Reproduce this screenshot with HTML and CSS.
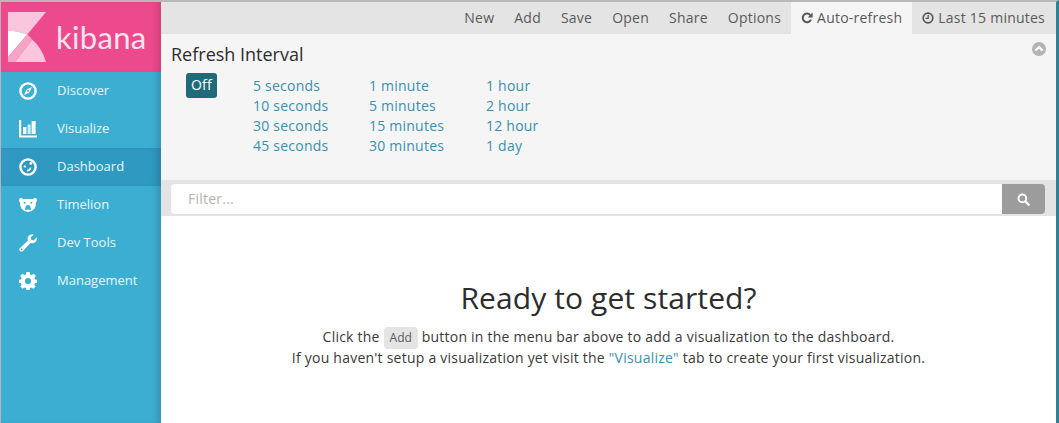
FILE: index.html
```html
<!DOCTYPE html>
<html lang="en">
<head>
<meta charset="utf-8">
<title>Kibana</title>
<link rel="stylesheet" href="styles.css">
</head>
<body>
<div class="app">
  <aside class="sidebar">
    <div class="brand">
      <svg class="logo" viewBox="0 0 38 50" width="38" height="50">
        <path fill="#f9c6dd" d="M0 0H38L19.3 22.5Q10 18.7 0 18.7Z"/>
        <path fill="#ffffff" d="M0 18.7Q10 18.7 19.3 22.5L0 45Z"/>
        <path fill="#f5a3c7" d="M0 45L19.3 22.5Q22 24.5 24.3 27.8L7 50H0Z"/>
        <path fill="#f9c6dd" d="M7 50L24.3 27.8Q34 36 38 50Z"/>
      </svg>
      <span class="brand-name">kibana</span>
    </div>
    <nav class="nav">
      <a class="nav-item"><svg class="nav-icon" viewBox="0 0 18 18"><circle cx="9" cy="9" r="7.6" fill="none" stroke="#fff" stroke-width="2.4"/><path fill="#fff" d="M13 5L10.4 10.4 5 13 7.6 7.6Z"/><circle cx="9" cy="9" r="1" fill="#3caed2"/></svg><span>Discover</span></a>
      <a class="nav-item"><svg class="nav-icon" viewBox="0 0 18 18"><path fill="#fff" d="M0 0H2.2V15.4H18V17.6H0Z"/><rect x="4" y="7" width="3.4" height="7" fill="#fff"/><rect x="8.6" y="4.5" width="3" height="9.5" fill="#fff" opacity=".8"/><rect x="12.6" y="1" width="4" height="13" fill="#fff"/></svg><span>Visualize</span></a>
      <a class="nav-item active"><svg class="nav-icon" viewBox="0 0 18 18"><circle cx="9" cy="9" r="7.6" fill="none" stroke="#fff" stroke-width="2.4"/><circle cx="5.8" cy="8.4" r="1.2" fill="#fff"/><circle cx="11.8" cy="5.4" r="1.4" fill="#fff"/><path fill="none" stroke="#fff" stroke-width="1.6" d="M8 12.6Q11 12.6 11.6 9.6"/></svg><span>Dashboard</span></a>
      <a class="nav-item"><svg class="nav-icon" viewBox="0 0 18 18"><path fill="#fff" d="M0 4Q0 2 2 2 3.4 2 4.2 3H13.8Q14.6 2 16 2 18 2 18 4 18 5.6 17 6.4 17.4 14.6 9 16 .6 14.6 1 6.4 0 5.6 0 4Z"/><circle cx="5.6" cy="6.8" r="1" fill="#3caed2"/><circle cx="12.4" cy="6.8" r="1" fill="#3caed2"/><path fill="#3caed2" d="M6 14Q6.2 9 9 9T12 14Q9 12.8 6 14Z"/></svg><span>Timelion</span></a>
      <a class="nav-item"><svg class="nav-icon" viewBox="0 0 18 18"><path fill="#fff" d="M17.6 3.2Q18.4 6.4 16.2 8.2 14 10 11.4 8.9L4 16.9Q2.4 18.2.9 17 -.4 15.5 1 14L9 6.6Q7.9 4 9.7 1.8 11.6-.3 14.8.4L11.6 3.5 12.2 5.8 14.5 6.4Z"/><circle cx="2.6" cy="15.4" r=".9" fill="#3caed2"/></svg><span>Dev Tools</span></a>
      <a class="nav-item"><svg class="nav-icon" viewBox="0 0 18 18"><path fill="#fff" fill-rule="evenodd" d="M7.4 0H10.6L11.1 2.4 12.7 3.1 14.8 1.7 16.9 3.9 15.5 5.9 16.2 7.5 18 7.8V10.8L15.9 11.2 15.3 12.7 16.6 14.6 14.4 16.8 12.5 15.5 11 16.1 10.6 18H7.4L7 16.1 5.4 15.5 3.5 16.8 1.3 14.6 2.6 12.7 2 11.2 0 10.8V7.8L2 7.4 2.6 5.9 1.2 3.9 3.3 1.7 5.3 3.1 6.9 2.4ZM9 5.9A3.1 3.1 0 1 0 9 12.1 3.1 3.1 0 1 0 9 5.9Z"/></svg><span>Management</span></a>
    </nav>
  </aside>
  <main class="main">
    <header class="topbar">
      <a class="tab">New</a>
      <a class="tab">Add</a>
      <a class="tab">Save</a>
      <a class="tab">Open</a>
      <a class="tab">Share</a>
      <a class="tab">Options</a>
      <a class="tab current"><svg class="tab-icon" viewBox="0 0 12 12"><path fill="none" stroke="#555" stroke-width="2" d="M10 7.6A4.3 4.3 0 1 1 9.2 3"/><path fill="#555" d="M11.6.6V5.6H6.8Z"/></svg>Auto-refresh</a>
      <a class="tab"><svg class="tab-icon" viewBox="0 0 12 12"><circle cx="6" cy="6" r="4.8" fill="none" stroke="#555" stroke-width="1.7"/><path fill="none" stroke="#555" stroke-width="1.3" d="M6.2 2.8V6.4H3.6"/></svg>Last 15 minutes</a>
    </header>
    <section class="panel">
      <div class="panel-head">
        <h2 class="panel-title">Refresh Interval</h2>
        <svg class="collapse" viewBox="0 0 14 14" width="14" height="14"><circle cx="7" cy="7" r="7" fill="#b3b3b3"/><path fill="none" stroke="#fff" stroke-width="2.2" d="M3.4 8.6L7 5 10.6 8.6"/></svg>
      </div>
      <div class="intervals">
        <div class="off-col"><span class="off">Off</span></div>
        <ul class="col col-a"><li>5 seconds</li><li>10 seconds</li><li>30 seconds</li><li>45 seconds</li></ul>
        <ul class="col col-b"><li>1 minute</li><li>5 minutes</li><li>15 minutes</li><li>30 minutes</li></ul>
        <ul class="col"><li>1 hour</li><li>2 hour</li><li>12 hour</li><li>1 day</li></ul>
      </div>
    </section>
    <div class="filter-band">
      <div class="filter">
        <span class="filter-input">Filter...</span>
        <span class="filter-btn"><svg viewBox="0 0 14 14" width="13" height="13"><circle cx="5.8" cy="5.8" r="4.2" fill="none" stroke="#fff" stroke-width="2"/><path stroke="#fff" stroke-width="2.4" stroke-linecap="round" d="M9 9L12.6 12.6"/></svg></span>
      </div>
    </div>
    <section class="empty">
      <h1 class="empty-title">Ready to get started?</h1>
      <p class="empty-line">Click the <span class="kbd">Add</span> button in the menu bar above to add a visualization to the dashboard.</p>
      <p class="empty-line">If you haven't setup a visualization yet visit the <a class="link">"Visualize"</a> tab to create your first visualization.</p>
    </section>
  </main>
</div>
</body>
</html>
```

FILE: styles.css
```css
* { box-sizing: border-box; }
html, body { margin: 0; height: 100%; overflow: hidden; background: #fff; }
body { font-family: "Open Sans", sans-serif; font-size: 14px; letter-spacing: .23px; color: #2d2d2d; }

.app {
  display: flex;
  height: 423px;
  border-top: 2px solid #b9b9b9;
  border-left: 1px solid #b5b5b5;
  border-right: 3px solid #2f8296;
}

.sidebar {
  width: 160px;
  flex: none;
  background: #3caed2;
  box-shadow: inset -7px 0 6px -3px rgba(0, 0, 0, .14);
}
.brand {
  height: 70px;
  background: #ec4a8c;
  box-shadow: inset -7px 0 6px -3px rgba(0, 0, 0, .12);
  display: flex;
  align-items: flex-start;
  padding: 10px 0 0 7px;
}
.brand-name {
  font-family: "Lato", sans-serif;
  font-size: 31px;
  font-weight: 400;
  line-height: 40px;
  letter-spacing: .3px;
  color: #fde3ee;
  margin: 5px 0 0 10px;
}
.nav-item {
  display: flex;
  align-items: center;
  height: 38px;
  padding-left: 18px;
  color: #e6f6fb;
  font-size: 13px;
  letter-spacing: 0;
}
.nav-item span { position: relative; top: -1px; }
.nav-item.active { background: #2f99c1; box-shadow: inset -7px 0 6px -3px rgba(0, 0, 0, .14); }
.nav-icon { width: 18px; height: 18px; margin-right: 20px; flex: none; }

.main { flex: 1; min-width: 0; display: flex; flex-direction: column; }

.topbar {
  height: 32px;
  flex: none;
  background: #e4e4e4;
  display: flex;
  justify-content: flex-end;
  padding-right: 1px;
  color: #5a5a5a;
}
.tab {
  display: flex;
  align-items: center;
  padding: 0 10px 1px;
  color: #5a5a5a;
  white-space: nowrap;
}
.tab.current { background: #f5f5f5; }
.tab-icon { width: 12px; height: 12px; margin-right: 4px; }

.panel { height: 146px; flex: none; background: #f5f5f5; padding: 8px 10px 0; }
.panel-head { display: flex; justify-content: space-between; align-items: flex-start; }
.panel-title { margin: 0; font-size: 18px; font-weight: 400; line-height: 24px; letter-spacing: 0; color: #2d2d2d; }
.intervals { display: flex; margin-top: 7px; padding-left: 15px; line-height: 20px; }
.off-col { width: 67px; flex: none; }
.off {
  display: block;
  width: 31px;
  height: 25px;
  line-height: 24px;
  text-align: center;
  color: #fff;
  background: #1f6b7a;
  border-radius: 3px;
}
.col { list-style: none; margin: 3px 0 0; padding: 0; color: #3a90ae; width: 116px; flex: none; }
.col-b { width: 117px; }

.filter-band { height: 36px; flex: none; background: #e4e4e4; padding: 4px 11px 2px 10px; }
.filter { display: flex; height: 30px; }
.filter-input {
  flex: 1;
  background: #fff;
  border-radius: 4px 0 0 4px;
  padding-left: 17px;
  line-height: 30px;
  color: #b4b4b4;
}
.filter-btn {
  width: 43px;
  flex: none;
  background: #9c9c9c;
  border-radius: 0 4px 4px 0;
  display: flex;
  align-items: center;
  justify-content: center;
}

.empty { flex: 1; text-align: center; padding-top: 61px; }
.empty-title { margin: 0 0 7px; font-size: 30px; font-weight: 400; line-height: 42px; letter-spacing: .1px; color: #2d2d2d; }
.empty-line { margin: 0; line-height: 21px; color: #3a3a3a; }
.kbd {
  display: inline-block;
  padding: 0 6px;
  margin: -2px 0;
  height: 22px;
  line-height: 22px;
  font-size: 12px;
  letter-spacing: 0;
  color: #5a5a5a;
  background: #e4e4e4;
  border-radius: 4px;
  vertical-align: middle;
}
.link { color: #3a90ae; }
```
